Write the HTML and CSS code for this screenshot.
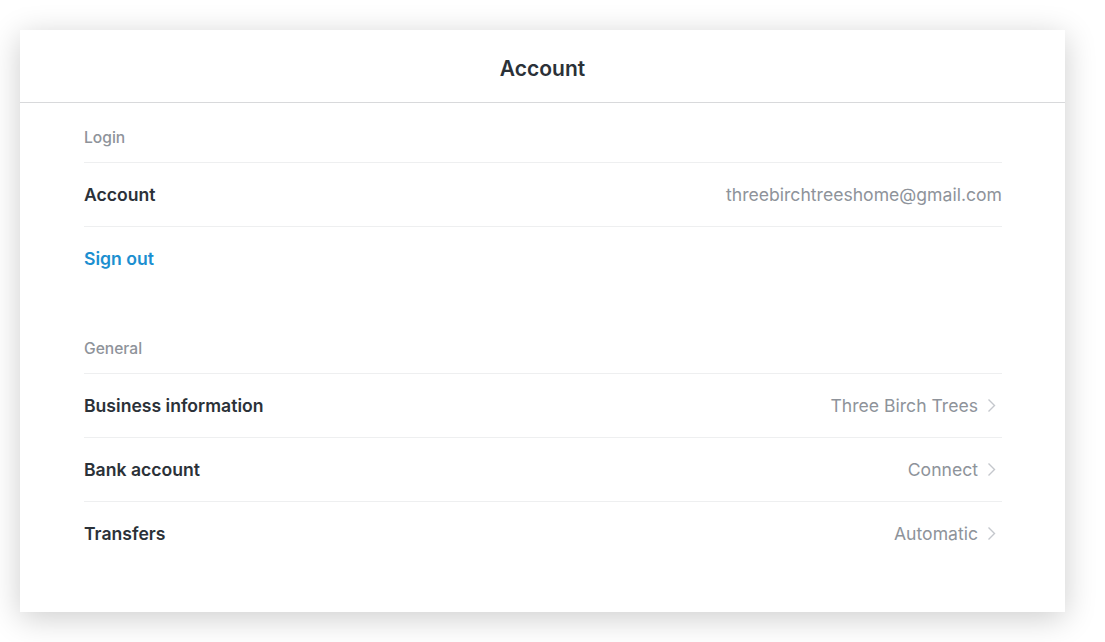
FILE: index.html
```html
<!DOCTYPE html>
<html>
<head>
<meta charset="utf-8">
<link rel="stylesheet" href="styles.css">
</head>
<body>
<div class="card">
  <div class="header">Account</div>
  <div class="content">
    <div class="section">
      <div class="section-label">Login</div>
      <div class="row">
        <span class="label">Account</span>
        <span class="value">threebirchtreeshome@gmail.com</span>
      </div>
      <div class="row no-border">
        <span class="label link">Sign out</span>
      </div>
    </div>
    <div class="section section-gap">
      <div class="section-label">General</div>
      <div class="row">
        <span class="label">Business information</span>
        <span class="value">Three Birch Trees<svg class="chev" width="9" height="15" viewBox="0 0 9 15"><path d="M1.5 1.5 L7.5 7.5 L1.5 13.5" fill="none" stroke="#c4c7cc" stroke-width="1.4"/></svg></span>
      </div>
      <div class="row">
        <span class="label">Bank account</span>
        <span class="value">Connect<svg class="chev" width="9" height="15" viewBox="0 0 9 15"><path d="M1.5 1.5 L7.5 7.5 L1.5 13.5" fill="none" stroke="#c4c7cc" stroke-width="1.4"/></svg></span>
      </div>
      <div class="row">
        <span class="label">Transfers</span>
        <span class="value">Automatic<svg class="chev" width="9" height="15" viewBox="0 0 9 15"><path d="M1.5 1.5 L7.5 7.5 L1.5 13.5" fill="none" stroke="#c4c7cc" stroke-width="1.4"/></svg></span>
      </div>
    </div>
  </div>
</div>
</body>
</html>
```

FILE: styles.css
```css
html, body {
  margin: 0;
  background: #ffffff;
}
body {
  padding: 30px 40px 30px 20px;
  font-family: "Inter", "Open Sans", sans-serif;
  color: #2b3138;
}
.card {
  background: #fff;
  height: 582px;
  box-shadow: 0 6px 30px rgba(0, 0, 0, 0.2);
  box-sizing: border-box;
}
.header {
  height: 73px;
  border-bottom: 1px solid #d8d9db;
  display: flex;
  align-items: center;
  justify-content: center;
  font-size: 21px;
  font-weight: 600;
  color: #2b3138;
  box-sizing: border-box;
  padding-top: 4px;
}
.content {
  padding: 0 63px 0 64px;
}
.section-label {
  height: 59px;
  box-sizing: border-box;
  padding-top: 25px;
  font-size: 15.6px;
  font-weight: 500;
  color: #8e939a;
  line-height: 20px;
}
.section-gap {
  margin-top: 24px;
}
.row {
  height: 64px;
  border-top: 1px solid #eeeff0;
  display: flex;
  align-items: center;
  justify-content: space-between;
  box-sizing: border-box;
}
.label {
  font-size: 17.6px;
  font-weight: 600;
  color: #2b3138;
}
.link {
  color: #1c8fd0;
}
.value {
  font-size: 17.6px;
  color: #8e939a;
  display: flex;
  align-items: center;
}
.chev {
  margin-left: 9px;
  margin-right: 6px;
}
```
